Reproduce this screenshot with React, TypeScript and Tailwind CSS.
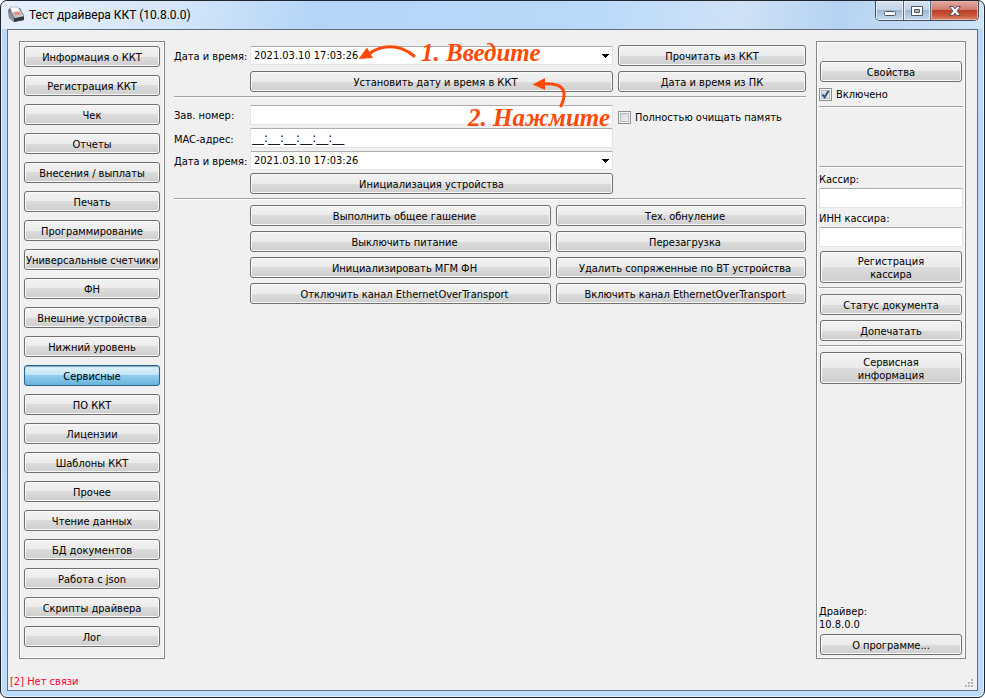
import React from "react";
import { clsx } from "clsx";

const sections = [
  "Информация о ККТ",
  "Регистрация ККТ",
  "Чек",
  "Отчеты",
  "Внесения / выплаты",
  "Печать",
  "Программирование",
  "Универсальные счетчики",
  "ФН",
  "Внешние устройства",
  "Нижний уровень",
  "Сервисные",
  "ПО ККТ",
  "Лицензии",
  "Шаблоны ККТ",
  "Прочее",
  "Чтение данных",
  "БД документов",
  "Работа с json",
  "Скрипты драйвера",
  "Лог",
];

const serviceActions = [
  ["Выполнить общее гашение", "Тех. обнуление"],
  ["Выключить питание", "Перезагрузка"],
  ["Инициализировать МГМ ФН", "Удалить сопряженные по BT устройства"],
  ["Отключить канал EthernetOverTransport", "Включить канал EthernetOverTransport"],
];

interface PushButtonProps {
  children: React.ReactNode;
  active?: boolean;
  tall?: boolean;
  className?: string;
}

const PushButton: React.FC<PushButtonProps> = ({ children, active, tall, className }) => (
  <button
    type="button"
    className={clsx(
      "flex shrink-0 items-center justify-center rounded-[3px] border pt-[2px] text-center whitespace-nowrap",
      tall ? "h-8" : "h-[21px]",
      active
        ? "border-[#2c628b] bg-[linear-gradient(#e3f3fc_0%,#c0e3f7_50%,#93cdee_50%,#68b3db_100%)] shadow-[inset_0_1px_1px_#7fa9c4]"
        : "border-[#707070] bg-[linear-gradient(#f3f3f3_0%,#ebebeb_50%,#dcdcdc_50%,#cecece_100%)] shadow-[inset_0_0_0_1px_#f8f8f8]",
      className
    )}
  >
    {children}
  </button>
);

const Divider: React.FC<{ className?: string }> = ({ className }) => (
  <hr className={clsx("h-[2px] shrink-0 border-0 border-t border-[#a0a0a0] bg-white", className)} />
);

const fieldClasses =
  "w-full min-w-0 rounded-[1px] border border-[#e2e3ea] border-t-[#abadb3] bg-white outline-none";

const TextField: React.FC<{ id: string; value?: string; className?: string }> = ({
  id,
  value = "",
  className,
}) => (
  <input
    id={id}
    type="text"
    defaultValue={value}
    className={clsx(fieldClasses, "h-5 px-px", className)}
  />
);

const DateField: React.FC<{ id: string; value: string }> = ({ id, value }) => (
  <div className="relative">
    <select
      id={id}
      className={clsx(fieldClasses, "block h-[19px] appearance-none px-[3px] pt-px leading-4")}
    >
      <option>{value}</option>
    </select>
    <svg
      className="pointer-events-none absolute top-[8px] right-[4px] h-[4px] w-[7px]"
      viewBox="0 0 7 4"
      shapeRendering="crispEdges"
    >
      <path d="M0 0H7V1H6V2H5V3H4V4H3V3H2V2H1V1H0Z" fill="#000" />
    </svg>
  </div>
);

interface CheckFieldProps {
  label: string;
  checked?: boolean;
  className?: string;
}

const CheckField: React.FC<CheckFieldProps> = ({ label, checked, className }) => (
  <label className={clsx("flex items-center gap-1 whitespace-nowrap", className)}>
    <span className="grid shrink-0">
      <input
        type="checkbox"
        defaultChecked={checked}
        className="peer col-start-1 row-start-1 size-[13px] appearance-none border border-[#8e8f8f] bg-[linear-gradient(135deg,#cbcfd5,#f6f6f6)] shadow-[inset_0_0_0_1px_#f4f4f4,inset_0_0_0_2px_#b8bdc5]"
      />
      <svg
        className="pointer-events-none invisible col-start-1 row-start-1 size-[13px] peer-checked:visible"
        viewBox="0 0 13 13"
      >
        <path d="M3.5 6.5L5.6 9.2L9.5 3" fill="none" stroke="#2d5080" strokeWidth="2" />
      </svg>
    </span>
    {label}
  </label>
);

const AppIcon: React.FC = () => (
  <svg className="size-[18px]" viewBox="0 0 18 18">
    <path d="M1 4L3 2H13L15 6L17 9V14L7 16L2 12Z" fill="#6a7077" />
    <path d="M3 1H11L14 6L5 7Z" fill="#f5f6f7" stroke="#9a9fa5" strokeWidth="0.5" />
    <path d="M1 4L4 7L7 12V16L2 12Z" fill="#8c9299" />
    <path d="M5 7L14 6L17 10L8 12Z" fill="#c9ccd0" />
    <path d="M7 6L12 5.4L14 8.6L8 9.6Z" fill="#e0907a" />
    <path d="M7 12.5L17 10.5V14L7 16Z" fill="#33373c" />
  </svg>
);

const WindowControls: React.FC = () => (
  <div className="flex h-5 w-[104px] overflow-hidden rounded-b-[5px] border border-t-0 border-[#414c5c]">
    <button
      type="button"
      aria-label="Свернуть"
      className="flex w-[28px] items-center justify-center border-r border-[#5b6a7e] bg-[linear-gradient(#d7e3f0_0%,#c2d3e6_48%,#9eb7d2_48%,#c5daed_100%)] shadow-[inset_0_0_0_1px_#e6eff8]"
    >
      <svg className="h-[17px] w-3" viewBox="0 0 12 17">
        <rect x="0.5" y="9.5" width="11" height="4" rx="1" fill="#fff" stroke="#535666" />
      </svg>
    </button>
    <button
      type="button"
      aria-label="Развернуть"
      className="flex w-[27px] items-center justify-center border-r border-[#5b6a7e] bg-[linear-gradient(#d7e3f0_0%,#c2d3e6_48%,#9eb7d2_48%,#c5daed_100%)] shadow-[inset_0_0_0_1px_#e6eff8]"
    >
      <svg className="h-[17px] w-3" viewBox="0 0 12 17">
        <path
          d="M0.5 4.5H11.5V13.5H0.5ZM3.5 7.5V10.5H8.5V7.5Z"
          fill="#fff"
          fillRule="evenodd"
          stroke="#535666"
        />
      </svg>
    </button>
    <button
      type="button"
      aria-label="Закрыть"
      className="flex flex-1 items-center justify-center bg-[linear-gradient(#e3aaa2_0%,#d0796c_48%,#b83c28_48%,#c9553a_75%,#dd8a70_100%)] shadow-[inset_0_0_0_1px_#e6b0a4]"
    >
      <svg className="h-[17px] w-3" viewBox="0 0 12 17">
        <path
          d="M0.5 4.5H4L6 6.9L8 4.5H11.5L8 9L11.5 13.5H8L6 11.1L4 13.5H0.5L4 9Z"
          fill="#fff"
          stroke="#535666"
        />
      </svg>
    </button>
  </div>
);

// Orange hand-written hints drawn over the form
const Hints: React.FC = () => (
  <div className="pointer-events-none absolute inset-0 text-[#ff4a0a]">
    <svg className="absolute top-[3px] left-[184px] h-5 w-16" viewBox="0 0 64 20" fill="none">
      <path d="M11 10C22 1 41 -1 56 12" stroke="currentColor" strokeWidth="3" strokeLinecap="round" />
      <path d="M0.5 15L9 3.5L15 14Z" fill="currentColor" />
    </svg>
    <p className="absolute top-[-6px] left-[247px] font-['Liberation_Serif',serif] text-[25px] leading-9 font-bold whitespace-nowrap italic">
      1. Введите
    </p>
    <svg className="absolute top-9 left-[358px] h-8 w-9" viewBox="0 0 36 32" fill="none">
      <path d="M10 7C26 6 38 9 29 29" stroke="currentColor" strokeWidth="3" strokeLinecap="round" />
      <path d="M0.5 7.5L13 1V13Z" fill="currentColor" />
    </svg>
    <p className="absolute top-[59px] left-[294px] font-['Liberation_Serif',serif] text-[25px] leading-9 font-bold whitespace-nowrap italic">
      2. Нажмите
    </p>
  </div>
);

const panelClasses = "flex shrink-0 flex-col border border-[#828790] shadow-[inset_0_0_0_1px_#fff]";

const ServicePage: React.FC = () => (
  <main className="relative ml-[9px] min-w-0 flex-1">
    <div className="grid grid-cols-[71px_363fr_188fr] items-center gap-x-[5px] gap-y-[5px] pt-1">
      <label htmlFor="date" className="pt-[2px] whitespace-nowrap">
        Дата и время:
      </label>
      <DateField id="date" value="2021.03.10 17:03:26" />
      <PushButton>Прочитать из ККТ</PushButton>
      <PushButton className="col-start-2 pl-2">Установить дату и время в ККТ</PushButton>
      <PushButton>Дата и время из ПК</PushButton>
    </div>
    <Divider className="mt-1" />
    <div className="mt-[7px] grid grid-cols-[71px_363fr_188fr] items-center gap-x-[5px] gap-y-[3px]">
      <label htmlFor="serial" className="whitespace-nowrap">
        Зав. номер:
      </label>
      <TextField id="serial" />
      <CheckField label="Полностью очищать память" className="pt-1" />
      <label htmlFor="mac" className="pt-[2px] whitespace-nowrap">
        MAC-адрес:
      </label>
      <TextField
        id="mac"
        value="__:__:__:__:__:__"
        className="col-start-2 font-['DejaVu_Sans',sans-serif] text-xs"
      />
      <label htmlFor="init-date" className="col-start-1 pt-[2px] whitespace-nowrap">
        Дата и время:
      </label>
      <DateField id="init-date" value="2021.03.10 17:03:26" />
      <PushButton className="col-start-2">Инициализация устройства</PushButton>
    </div>
    <Divider className="mt-1" />
    <div className="mt-[5px] ml-[76px] grid grid-cols-[301fr_250fr] gap-[5px]">
      {serviceActions.flat().map((action) => (
        <PushButton key={action} className="pl-2">
          {action}
        </PushButton>
      ))}
    </div>
    <Hints />
  </main>
);

const SidePanel: React.FC = () => (
  <aside className={clsx(panelClasses, "ml-[10px] w-[150px] px-[2px] pb-[3px]")}>
    <PushButton className="mx-px mt-[19px]">Свойства</PushButton>
    <CheckField label="Включено" checked className="mt-1 h-4" />
    <Divider className="mt-1" />
    <Divider className="mt-[58px]" />
    <label htmlFor="cashier" className="mt-[5px]">
      Кассир:
    </label>
    <TextField id="cashier" className="mt-[2px]" />
    <label htmlFor="cashier-inn" className="mt-1">
      ИНН кассира:
    </label>
    <TextField id="cashier-inn" className="mt-[2px]" />
    <PushButton tall className="mx-px mt-1">
      Регистрация
      <br />
      кассира
    </PushButton>
    <Divider className="mt-1" />
    <PushButton className="mx-px mt-[5px]">Статус документа</PushButton>
    <PushButton className="mx-px mt-[5px]">Допечатать</PushButton>
    <Divider className="mt-1" />
    <PushButton tall className="mx-px mt-[5px]">
      Сервисная
      <br />
      информация
    </PushButton>
    <p className="mt-auto">
      Драйвер:
      <br />
      10.8.0.0
    </p>
    <PushButton className="mx-px mt-[3px]">О программе...</PushButton>
  </aside>
);

export default function App() {
  return (
    <div className="min-h-screen bg-white font-['DejaVu_Sans_Condensed','DejaVu_Sans',sans-serif] text-[11px] leading-[13px] text-black">
      <div className="flex min-h-screen flex-col rounded-[7px] border border-[#20262e] bg-[linear-gradient(#b9d7f6,#bddcfb)] px-[6px] pb-[6px] shadow-[inset_0_0_0_1px_#e4f1fd]">
        <header className="-mx-[5px] flex h-7 items-start justify-between rounded-t-md bg-[linear-gradient(100deg,#e6f0fb_0%,#d4e6f9_18%,#b4d5f8_32%,#b9d9fa_60%,#cfe2f6_75%,#b5d3f2_85%,#cfe3f7_100%)] pr-1 pl-[5px]">
          <div className="flex items-center gap-1 pt-[5px]">
            <AppIcon />
            <h1 className="font-[Roboto,'Open_Sans',sans-serif] text-xs">
              Тест драйвера ККТ (10.8.0.0)
            </h1>
          </div>
          <WindowControls />
        </header>
        <div className="flex flex-1 flex-col border border-[#5f6f82] bg-[#f0f0f0]">
          <div className="flex flex-1 pt-[11px] pr-[11px] pl-[11px]">
            <nav className={clsx(panelClasses, "w-[146px] gap-2 px-1 pt-1 pb-[11px]")}>
              {sections.map((section) => (
                <PushButton key={section} active={section === "Сервисные"}>
                  {section}
                </PushButton>
              ))}
            </nav>
            <ServicePage />
            <SidePanel />
          </div>
          <footer className="flex h-[31px] items-end justify-between pr-[3px] pb-[2px] pl-[2px]">
            <p className="text-[#ff0033]">[2] Нет связи</p>
            <svg className="size-[9px]" viewBox="0 0 9 9" fill="#b4b4b4">
              <path d="M6 0h2v2H6zM3 3h2v2H3zM6 3h2v2H6zM0 6h2v2H0zM3 6h2v2H3zM6 6h2v2H6z" />
            </svg>
          </footer>
        </div>
      </div>
    </div>
  );
}
